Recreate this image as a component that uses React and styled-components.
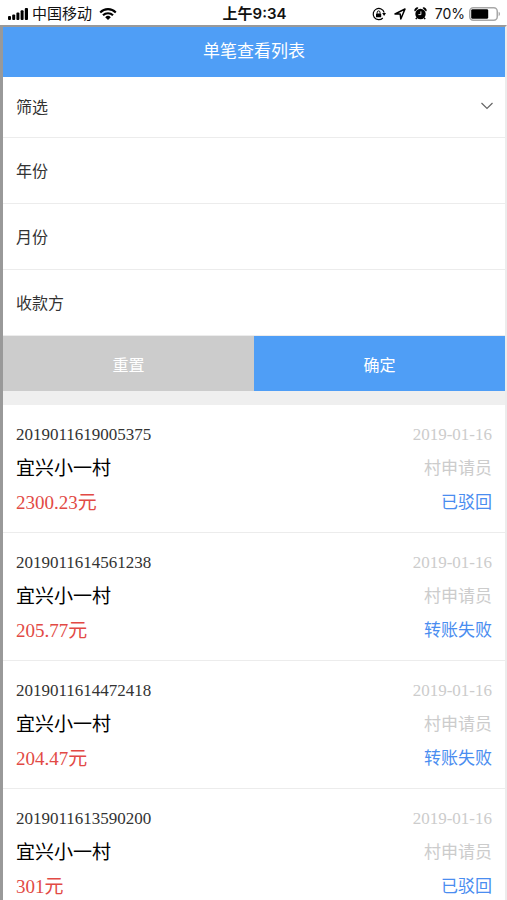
import React, { useState } from 'react';
import styled, { createGlobalStyle } from 'styled-components';

const GlobalStyle = createGlobalStyle`
  * {
    box-sizing: border-box;
  }

  body {
    margin: 0;
    background: #fff;
    font-family: "Liberation Serif", "Noto Sans CJK SC", serif;
  }

  button, input {
    font-family: inherit;
    border: none;
    border-radius: 0;
    padding: 0;
    background: none;
    outline: none;
  }
`;

const records = [
  { id: '2019011619005375', date: '2019-01-16', name: '宜兴小一村', role: '村申请员', amount: '2300.23', status: '已驳回' },
  { id: '2019011614561238', date: '2019-01-16', name: '宜兴小一村', role: '村申请员', amount: '205.77', status: '转账失败' },
  { id: '2019011614472418', date: '2019-01-16', name: '宜兴小一村', role: '村申请员', amount: '204.47', status: '转账失败' },
  { id: '2019011613590200', date: '2019-01-16', name: '宜兴小一村', role: '村申请员', amount: '301', status: '已驳回' },
];

const emptyFilter = { year: '', month: '', payee: '' };

const fields = [
  { key: 'year', label: '年份' },
  { key: 'month', label: '月份' },
  { key: 'payee', label: '收款方' },
];

const SignalIcon = () => (
  <svg width="20" height="12" viewBox="0 0 20 12">
    <rect x="0" y="8" width="3" height="4" rx="1" />
    <rect x="4.2" y="6.5" width="3" height="5.5" rx="1" />
    <rect x="8.4" y="4.5" width="3" height="7.5" rx="1" />
    <rect x="12.6" y="2.3" width="3" height="9.7" rx="1" />
    <rect x="16.8" y="0" width="3.2" height="12" rx="1" />
  </svg>
);

const WifiIcon = () => (
  <svg width="18" height="12" viewBox="0 0 18 12">
    <g fill="none" stroke="#000" strokeWidth="2.1">
      <path d="M1.2 4.4a11 11 0 0 1 15.6 0" />
      <path d="M4 7.3a7 7 0 0 1 10 0" />
    </g>
    <path d="M9 12 6.2 9.2a4 4 0 0 1 5.6 0z" />
  </svg>
);

const RotationLockIcon = () => (
  <svg width="14" height="14" viewBox="0 0 14 14">
    <path d="M10.8 11A5.6 5.6 0 1 1 12.2 5.6" fill="none" stroke="#000" strokeWidth="1.2" />
    <path d="M10.2 6h3.8l-1.9 2.9z" />
    <rect x="4" y="6.4" width="5.2" height="3.8" rx="0.5" />
    <path d="M5.2 6.6V5.3a1.4 1.4 0 0 1 2.8 0v1.3" fill="none" stroke="#000" strokeWidth="1" />
  </svg>
);

const LocationIcon = () => (
  <svg width="12" height="12" viewBox="0 0 12 12">
    <path d="M1 6 11 1 6.8 11 6.2 6z" fill="none" stroke="#000" strokeWidth="1.5" strokeLinejoin="round" />
  </svg>
);

const AlarmIcon = () => (
  <svg width="13" height="13" viewBox="0 0 13 13">
    <circle cx="6.5" cy="7" r="5.2" />
    <path d="M.3 3.8A3.2 3.2 0 0 1 4 .4L4.4 1 1 4.6zM12.7 3.8A3.2 3.2 0 0 0 9 .4L8.6 1 12 4.6z" />
    <path d="M3 10.6 1.8 12.2M10 10.6l1.2 1.6" stroke="#000" strokeWidth="1.4" />
    <path d="M6.9 4.4v3.2H4.4" fill="none" stroke="#fff" strokeWidth="0.9" />
  </svg>
);

const BatteryIcon = () => (
  <svg width="32" height="14" viewBox="0 0 32 14">
    <rect x="0.75" y="0.75" width="27.5" height="12.5" rx="3.5" fill="#fff" stroke="#a8a8a8" strokeWidth="1.5" />
    <rect x="2.2" y="2.2" width="17" height="9.6" rx="1.4" />
    <path d="M29.6 4.8a2.4 2.4 0 0 1 0 4.4z" fill="#a8a8a8" />
  </svg>
);

const ChevronIcon = ({ open }) => (
  <svg width="14" height="8" viewBox="0 0 14 8">
    <path d={open ? 'M1.5 1 7 6.5 12.5 1' : 'M1.5 6.5 7 1l5.5 5.5'} fill="none" stroke="#666" strokeWidth="1.2" />
  </svg>
);

const App = () => {
  const [open, setOpen] = useState(true);
  const [filter, setFilter] = useState(emptyFilter);

  return (
    <Screen>
      <GlobalStyle />
      <StatusBar>
        <StatusSide>
          <SignalIcon />
          <Carrier>中国移动</Carrier>
          <WifiIcon />
        </StatusSide>
        <Clock>上午9:34</Clock>
        <StatusSide $end>
          <StatusIcons>
            <RotationLockIcon />
            <LocationIcon />
            <AlarmIcon />
          </StatusIcons>
          <Percent>70%</Percent>
          <BatteryIcon />
        </StatusSide>
      </StatusBar>

      <Page>
        <Header>单笔查看列表</Header>

        <form onSubmit={(e) => e.preventDefault()}>
          <FilterToggle type="button" aria-expanded={open} onClick={() => setOpen(!open)}>
            筛选
            <ChevronIcon open={open} />
          </FilterToggle>
          {open && (
            <>
              {fields.map(({ key, label }) => (
                <Field key={key}>
                  <label htmlFor={key}>{label}</label>
                  <FieldInput
                    id={key}
                    value={filter[key]}
                    onChange={(e) => setFilter({ ...filter, [key]: e.target.value })}
                  />
                </Field>
              ))}
              <Actions>
                <ActionButton type="button" onClick={() => setFilter(emptyFilter)}>重置</ActionButton>
                <ActionButton type="submit" $primary>确定</ActionButton>
              </Actions>
            </>
          )}
        </form>

        <List>
          {records.map((item) => (
            <Record key={item.id}>
              <Line>
                <Serial>{item.id}</Serial>
                <Muted>{item.date}</Muted>
              </Line>
              <Line>
                <Name>{item.name}</Name>
                <Muted>{item.role}</Muted>
              </Line>
              <Line>
                <Amount>{item.amount}元</Amount>
                <Status>{item.status}</Status>
              </Line>
            </Record>
          ))}
        </List>
      </Page>
    </Screen>
  );
};

const Screen = styled.div`
  display: flex;
  flex-direction: column;
  height: 100vh;
  overflow: hidden;
`;

const StatusBar = styled.div`
  display: grid;
  grid-template-columns: 1fr auto 1fr;
  align-items: center;
  flex: none;
  height: 25px;
  padding: 2px 6px 0 8px;
  font-family: Inter, "Noto Sans CJK SC", sans-serif;
  font-size: 15px;
  line-height: 22px;
  color: #111;

  svg {
    display: block;
    flex: none;
  }
`;

const StatusSide = styled.div`
  display: flex;
  align-items: center;
  justify-content: ${(p) => (p.$end ? 'flex-end' : 'flex-start')};
  gap: 4px;
`;

const StatusIcons = styled.div`
  display: flex;
  align-items: center;
  gap: 8px;
  margin-right: 4px;
`;

const Carrier = styled.span`
  margin-right: 3px;
`;

const Clock = styled.span`
  font-weight: 600;
`;

const Percent = styled.span`
  font-size: 14px;
`;

const Page = styled.main`
  flex: 1;
  min-height: 0;
  overflow: hidden;
  background: #efefef;
  border-style: solid;
  border-width: 2px 2px 0 3px;
  border-color: #999 #ececec #ececec #999;
`;

const Header = styled.h1`
  margin: 0;
  background: #4f9ef6;
  color: #fff;
  font-size: 17px;
  font-weight: 400;
  line-height: 50px;
  text-align: center;
`;

const FilterToggle = styled.button`
  display: flex;
  align-items: center;
  justify-content: space-between;
  width: 100%;
  height: 61px;
  padding: 0 11px 2px 13px;
  background: #fff;
  border-bottom: 1px solid #ececec;
  color: #333;
  font-size: 16px;
  cursor: pointer;
`;

const Field = styled.div`
  display: flex;
  align-items: center;
  height: 66px;
  padding: 0 13px 2px;
  background: #fff;
  border-bottom: 1px solid #ececec;
  color: #333;
  font-size: 16px;
`;

const FieldInput = styled.input`
  flex: 1;
  min-width: 0;
  height: 40px;
  margin-left: 16px;
  color: #333;
  font-size: 16px;
  text-align: right;
`;

const Actions = styled.div`
  display: flex;
`;

const ActionButton = styled.button`
  flex: 1;
  height: 55px;
  background: ${(p) => (p.$primary ? '#4f9ef6' : '#ccc')};
  color: #fff;
  font-size: 16px;
  cursor: pointer;
`;

const List = styled.ul`
  margin: 14px 0 0;
  padding: 0;
  list-style: none;
`;

const Record = styled.li`
  height: 128px;
  padding: 13px 13px 12px;
  background: #fff;
  border-bottom: 1px solid #ececec;
`;

const Line = styled.div`
  display: flex;
  align-items: center;
  justify-content: space-between;
  height: 34px;
  font-size: 17px;
  line-height: 34px;
`;

const Serial = styled.span`
  color: #333;
`;

const Muted = styled.span`
  color: #ccc;
`;

const Name = styled.span`
  color: #000;
  font-size: 19px;
`;

const Amount = styled.span`
  color: #e24a45;
  font-size: 19px;
`;

const Status = styled.span`
  color: #4a8df0;
`;

export default App;
